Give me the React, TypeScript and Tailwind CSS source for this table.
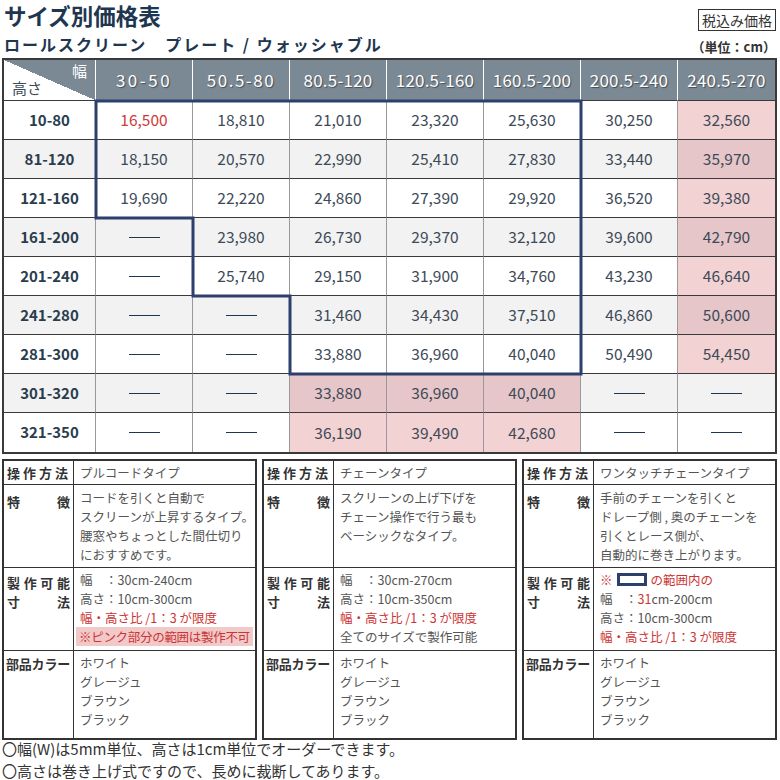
const WIDTHS = ["30-50", "50.5-80", "80.5-120", "120.5-160", "160.5-200", "200.5-240", "240.5-270"];

const ROWS: [string, string[]][] = [
  ["10-80", ["16,500", "18,810", "21,010", "23,320", "25,630", "30,250", "32,560"]],
  ["81-120", ["18,150", "20,570", "22,990", "25,410", "27,830", "33,440", "35,970"]],
  ["121-160", ["19,690", "22,220", "24,860", "27,390", "29,920", "36,520", "39,380"]],
  ["161-200", ["-", "23,980", "26,730", "29,370", "32,120", "39,600", "42,790"]],
  ["201-240", ["-", "25,740", "29,150", "31,900", "34,760", "43,230", "46,640"]],
  ["241-280", ["-", "-", "31,460", "34,430", "37,510", "46,860", "50,600"]],
  ["281-300", ["-", "-", "33,880", "36,960", "40,040", "50,490", "54,450"]],
  ["301-320", ["-", "-", "33,880", "36,960", "40,040", "-", "-"]],
  ["321-350", ["-", "-", "36,190", "39,490", "42,680", "-", "-"]],
];

function isPink(r: number, c: number) {
  if (r <= 6) return c === 6;
  return c >= 2 && c <= 4;
}

function cellBg(r: number, c: number) {
  const grey = r % 2 === 1;
  if (isPink(r, c)) return grey ? "bg-[#e6c6c9]" : "bg-[#f2d2d3]";
  return grey ? "bg-[#f2f2f2]" : "bg-white";
}

function Spread({ text }: { text: string }) {
  return (
    <div className="flex justify-between">
      {text.split("").map((ch, i) => (
        <span key={i}>{ch}</span>
      ))}
    </div>
  );
}

type Panel = {
  method: string;
  features: string[];
  sizes: React.ReactNode;
};

const PANELS: Panel[] = [
  {
    method: "プルコードタイプ",
    features: ["コードを引くと自動で", "スクリーンが上昇するタイプ。", "腰窓やちょっとした間仕切り", "におすすめです。"],
    sizes: (
      <>
        <div>幅　：30cm-240cm</div>
        <div>高さ：10cm-300cm</div>
        <div className="text-[#cc3333]">幅・高さ比 /1：3 が限度</div>
        <div className="-ml-[4px] mr-[2px] bg-[#f1c9c9] pl-[3px] tracking-[-0.3px] text-[#cc3333]">
          ※ピンク部分の範囲は製作不可
        </div>
      </>
    ),
  },
  {
    method: "チェーンタイプ",
    features: ["スクリーンの上げ下げを", "チェーン操作で行う最も", "ベーシックなタイプ。"],
    sizes: (
      <>
        <div>幅　：30cm-270cm</div>
        <div>高さ：10cm-350cm</div>
        <div className="text-[#cc3333]">幅・高さ比 /1：3 が限度</div>
        <div>全てのサイズで製作可能</div>
      </>
    ),
  },
  {
    method: "ワンタッチチェーンタイプ",
    features: ["手前のチェーンを引くと", "ドレープ側 , 奥のチェーンを", "引くとレース側が、", "自動的に巻き上がります。"],
    sizes: (
      <>
        <div className="flex items-center text-[#cc3333]">
          ※<span className="mx-[4px] inline-block h-[13px] w-[30px] border-[3px] border-[#2d3f6c]" />の範囲内の
        </div>
        <div>
          幅　：<span className="text-[#cc3333]">31</span>cm-200cm
        </div>
        <div>高さ：10cm-300cm</div>
        <div className="text-[#cc3333]">幅・高さ比 /1：3 が限度</div>
      </>
    ),
  },
];

function InfoPanel({ p }: { p: Panel }) {
  const label = "border-r border-[#333] px-[3px] text-[13px] font-bold text-[#333]";
  const body = "pl-[6px] text-[12.5px] leading-[19px] text-[#555]";
  return (
    <div className="grid w-[255px] grid-cols-[70px_1fr] grid-rows-[24px_83px_83px_87px] border-2 border-[#333]">
      <div className={`${label} flex items-center border-b tracking-[2px]`}>
        <div className="w-full">
          <Spread text="操作方法" />
        </div>
      </div>
      <div className={`${body} flex items-center border-b border-[#333]`}>{p.method}</div>

      <div className={`${label} border-b pt-[7px]`}>
        <Spread text="特徴" />
      </div>
      <div className={`${body} border-b border-[#333] pt-[3px]`}>
        {p.features.map((f) => (
          <div key={f}>{f}</div>
        ))}
      </div>

      <div className={`${label} border-b pt-[5px] leading-[19px]`}>
        <Spread text="製作可能" />
        <Spread text="寸法" />
      </div>
      <div className={`${body} border-b border-[#333] pt-[2px]`}>{p.sizes}</div>

      <div className="whitespace-nowrap border-r border-[#333] pl-[2px] pt-[3px] text-[13px] font-bold leading-[19px] tracking-[-0.2px] text-[#333]">
        部品カラー
      </div>
      <div className={`${body} pt-[2px]`}>
        <div>ホワイト</div>
        <div>グレージュ</div>
        <div>ブラウン</div>
        <div>ブラック</div>
      </div>
    </div>
  );
}

export default function App() {
  return (
    <div className="h-[780px] w-[780px] overflow-hidden bg-white font-['Noto_Sans_CJK_JP','Noto_Sans',sans-serif] text-[#3d4a57]">
      <div className="flex h-[58px] items-start justify-between pl-[4px] pr-[4px]">
        <div>
          <div className="mt-[1px] text-[22.5px] font-bold leading-[28px] text-[#1e3650]">サイズ別価格表</div>
          <div className="mt-[4px] text-[16px] font-bold leading-[22px] tracking-[2px] text-[#1e3650]">
            ロールスクリーン　プレート / ウォッシャブル
          </div>
        </div>
        <div className="flex flex-col items-end">
          <div className="mt-[9px] border border-[#333] px-[3px] text-[14px] leading-[20px] text-[#333]">
            税込み価格
          </div>
          <div className="mt-[7px] text-[13px] font-bold leading-[18px] text-[#333]">（単位：cm）</div>
        </div>
      </div>

      <div className="relative ml-[2px] w-[775px] border-2 border-[#3a3a3a]">
        <div className="grid grid-cols-[92px_repeat(7,97px)] grid-rows-[41px_repeat(9,39px)]">
          <div className="relative border-b border-r border-b-[#3a3a3a] border-r-white bg-[linear-gradient(to_top_right,#ffffff_50%,#7b8995_50%)]">
            <span className="absolute right-[8px] top-[0px] text-[15px] text-white">幅</span>
            <span className="absolute bottom-[1px] left-[8px] text-[15px] text-[#3d4a57]">高さ</span>
          </div>
          {WIDTHS.map((w, i) => (
            <div
              key={w}
              className={`flex items-center justify-center border-b border-b-[#3a3a3a] bg-[#7b8995] text-[17px] text-white [text-shadow:1px_1px_1px_rgba(0,0,0,0.45)] ${
                i < 6 ? "border-r border-r-white" : ""
              } ${i === 0 ? "tracking-[2.5px]" : i === 1 ? "tracking-[1.5px]" : "tracking-[0.2px]"}`}
            >
              {w}
            </div>
          ))}
          {ROWS.map(([h, vals], r) => (
            <>
              <div
                key={h}
                className={`flex items-center justify-center border-r border-r-[#999] text-[15px] font-bold text-[#2a3d4f] ${
                  r % 2 === 1 ? "bg-[#f2f2f2]" : "bg-white"
                } ${r < 8 ? "border-b border-b-[#3a3a3a]" : ""}`}
              >
                {h}
              </div>
              {vals.map((v, c) => (
                <div
                  key={`${h}-${c}`}
                  className={`flex items-center justify-center text-[15.5px] ${cellBg(r, c)} ${
                    c < 6 ? "border-r border-r-[#999]" : ""
                  } ${r < 8 ? "border-b border-b-[#3a3a3a]" : ""} ${r === 0 && c === 0 ? "text-[#d03a3a]" : ""}`}
                >
                  {v === "-" ? <span className="block h-px w-[31px] bg-[#1e3650]" /> : v}
                </div>
              ))}
            </>
          ))}
        </div>
        <svg className="pointer-events-none absolute left-0 top-0" width="771" height="392">
          <path
            d="M92 41 L577 41 L577 314 L286 314 L286 236 L189 236 L189 158 L92 158 Z"
            fill="none"
            stroke="#2d3f6c"
            strokeWidth="3"
          />
        </svg>
      </div>

      <div className="ml-[2px] mt-[5px] flex gap-[5px]">
        {PANELS.map((p) => (
          <InfoPanel key={p.method} p={p} />
        ))}
      </div>

      <div className="ml-[2px] mt-[-2px] text-[15px] leading-[22px] text-[#333]">
        <div>〇幅(W)は5mm単位、高さは1cm単位でオーダーできます。</div>
        <div>〇高さは巻き上げ式ですので、長めに裁断してあります。</div>
      </div>
    </div>
  );
}
